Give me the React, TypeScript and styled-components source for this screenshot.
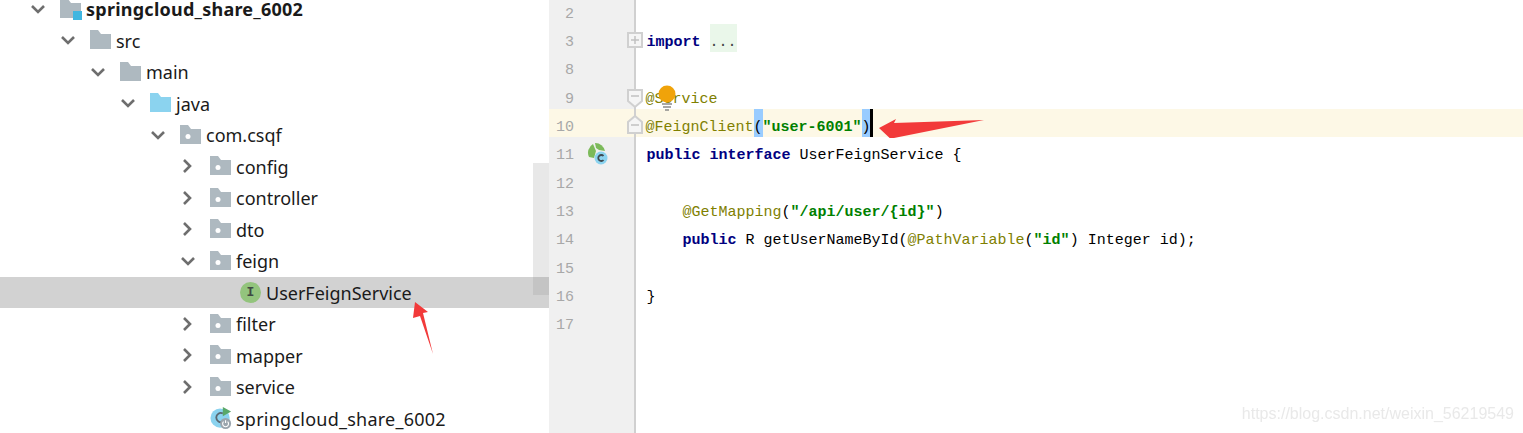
import styled, { createGlobalStyle } from "styled-components";

type Kind = "plain" | "package" | "source" | "root";

const treeRows: { name: string; level: number; open?: boolean; kind?: Kind; bold?: boolean; selected?: boolean; leaf?: "iface" | "run" }[] = [
  { name: "springcloud_share_6002", level: 0, open: true, kind: "root", bold: true },
  { name: "src", level: 1, open: true, kind: "plain" },
  { name: "main", level: 2, open: true, kind: "plain" },
  { name: "java", level: 3, open: true, kind: "source" },
  { name: "com.csqf", level: 4, open: true, kind: "package" },
  { name: "config", level: 5, kind: "package" },
  { name: "controller", level: 5, kind: "package" },
  { name: "dto", level: 5, kind: "package" },
  { name: "feign", level: 5, open: true, kind: "package" },
  { name: "UserFeignService", level: 6, leaf: "iface", selected: true },
  { name: "filter", level: 5, kind: "package" },
  { name: "mapper", level: 5, kind: "package" },
  { name: "service", level: 5, kind: "package" },
  { name: "springcloud_share_6002", level: 5, leaf: "run" },
];

function Chevron({ open }: { open?: boolean }) {
  return (
    <svg width="16" height="16" viewBox="0 0 16 16">
      <path
        d={open ? "M2 5l6 6 6-6" : "M4 2l6 6-6 6"}
        fill="none"
        stroke="#6e6e6e"
        strokeWidth="2.6"
      />
    </svg>
  );
}

function Folder({ kind }: { kind: Kind }) {
  const color = kind === "source" ? "#8bd3ef" : "#aeb9c0";
  return (
    <svg width="22" height="22" viewBox="0 0 22 22">
      <path d="M0 1h8l3 4h10v15H0z" fill={color} />
      {kind === "package" && <circle cx="8" cy="12.500" r="2.500" fill="#fff" />}
      {kind === "root" && <rect x="13" y="13" width="9" height="9" fill="#40b6e0" />}
    </svg>
  );
}

function RunIcon() {
  return (
    <svg width="24" height="24" viewBox="0 0 24 24">
      <circle cx="11" cy="12" r="10.500" fill="#8bd3ef" />
      <path d="M14 7a5 5 0 1 0 0 9" fill="none" stroke="#5a6770" strokeWidth="2" />
      <path d="M14 0l9 5-9 5z" fill="#59a869" />
      <circle cx="17" cy="18" r="6" fill="#9aa5ad" />
      <path d="M17 14.500v3M14.800 16a3.200 3.200 0 1 0 4.400 0" fill="none" stroke="#fff" strokeWidth="1.200" />
    </svg>
  );
}

function FoldMark({ type }: { type: "plus" | "close" | "open" }) {
  const outline =
    type === "plus"
      ? "M1 1h14v14H1z"
      : type === "close"
        ? "M1 1h14v11l-7 6-7-6z"
        : "M8 1l7 6v11H1V7z";
  const y = type === "open" ? 10 : type === "close" ? 7 : 8;
  return (
    <svg width="16" height="20" viewBox="0 0 16 20">
      <path d={outline} fill="#f5f5f5" stroke="#d0d0d0" strokeWidth="2" />
      <path d={`M4 ${y}h8`} stroke="#c0c0c0" strokeWidth="1.500" />
      {type === "plus" && <path d="M8 4v8" stroke="#c0c0c0" strokeWidth="1.500" />}
    </svg>
  );
}

function SpringMark() {
  return (
    <svg width="22" height="22" viewBox="0 0 22 22">
      <path d="M3 14A10 10 0 0 1 7 1l3 7-2 7z" fill="#7cba5a" />
      <path d="M9 0a10 10 0 0 1 10 8l-6-1-3-2z" fill="#7cba5a" />
      <circle cx="15" cy="15" r="6.500" fill="#8bd3ef" />
      <path d="M17.500 13a3 3 0 1 0 0 4" fill="none" stroke="#3f4a50" strokeWidth="1.800" />
    </svg>
  );
}

function App() {
  return (
    <Page>
      <GlobalStyle />
      <Tree>
        {treeRows.map((row, i) => (
          <TreeRow key={i} $level={row.level} $selected={row.selected}>
            <Toggle>{!row.leaf && <Chevron open={row.open} />}</Toggle>
            <NodeIcon>
              {row.kind && <Folder kind={row.kind} />}
              {row.leaf === "iface" && <InterfaceBadge>I</InterfaceBadge>}
              {row.leaf === "run" && <RunIcon />}
            </NodeIcon>
            <NodeName $bold={row.bold} $wide={row.leaf === "run"}>{row.name}</NodeName>
          </TreeRow>
        ))}
        <ScrollThumb />
        <ScrollThumbActive />
        <ArrowTree viewBox="0 0 30 60" width="30" height="60">
          <path d="M5 2l13 10-5 1 10 41-13-38-7 2z" fill="#f23a3a" />
        </ArrowTree>
      </Tree>
      <Editor>
        <CodeRow>
          <Gutter><LineNo>2</LineNo></Gutter>
          <Code />
        </CodeRow>
        <CodeRow>
          <Gutter><LineNo>3</LineNo><Marker /><FoldSlot $top={8}><FoldMark type="plus" /></FoldSlot></Gutter>
          <Code><Kw>import</Kw> <Folded>...</Folded></Code>
        </CodeRow>
        <CodeRow>
          <Gutter><LineNo>8</LineNo></Gutter>
          <Code />
        </CodeRow>
        <CodeRow>
          <Gutter><LineNo>9</LineNo><Marker /><FoldSlot $top={8}><FoldMark type="close" /></FoldSlot></Gutter>
          <Code $annotated><Ann>@Service</Ann></Code>
        </CodeRow>
        <CodeRow $current>
          <Gutter $current><LineNo>10</LineNo><Marker /><FoldSlot $top={6}><FoldMark type="open" /></FoldSlot></Gutter>
          <Code $annotated>
            <Ann>@FeignClient</Ann>
            <Match>(</Match>
            <Str>"user-6001"</Str>
            <Match>)</Match>
            <Caret />
          </Code>
        </CodeRow>
        <CodeRow>
          <Gutter><LineNo>11</LineNo><Marker><SpringMark /></Marker></Gutter>
          <Code><Kw>public interface</Kw> UserFeignService {"{"}</Code>
        </CodeRow>
        <CodeRow>
          <Gutter><LineNo>12</LineNo></Gutter>
          <Code />
        </CodeRow>
        <CodeRow>
          <Gutter><LineNo>13</LineNo></Gutter>
          <Code>{"    "}<Ann>@GetMapping</Ann>(<Str>"/api/user/{"{id}"}"</Str>)</Code>
        </CodeRow>
        <CodeRow>
          <Gutter><LineNo>14</LineNo></Gutter>
          <Code>{"    "}<Kw>public</Kw> R getUserNameById(<Ann>@PathVariable</Ann>(<Str>"id"</Str>) Integer id);</Code>
        </CodeRow>
        <CodeRow>
          <Gutter><LineNo>15</LineNo></Gutter>
          <Code />
        </CodeRow>
        <CodeRow>
          <Gutter><LineNo>16</LineNo></Gutter>
          <Code>{"}"}</Code>
        </CodeRow>
        <CodeRow>
          <Gutter><LineNo>17</LineNo></Gutter>
          <Code />
        </CodeRow>
        <FillerRow>
          <Gutter />
        </FillerRow>
        <Bulb viewBox="0 0 20 26" width="20" height="26">
          <circle cx="10" cy="9" r="8.500" fill="#f0a30a" />
          <path d="M5 19h10M6 22h8M8 25h4" stroke="#8a8a8a" strokeWidth="1.500" />
        </Bulb>
        <ArrowCode viewBox="0 0 110 24" width="110" height="24">
          <path d="M2 14l17-9-2 4 90-3-90 18 1 5z" fill="#f23a3a" />
        </ArrowCode>
        <Watermark>https://blog.csdn.net/weixin_56219549</Watermark>
      </Editor>
    </Page>
  );
}

const GlobalStyle = createGlobalStyle`
  html, body {
    margin: 0;
    padding: 0;
    background: #fff;
    overflow: hidden;
  }
`;

const Page = styled.div`
  display: flex;
  width: 1523px;
  height: 433px;
  overflow: hidden;
`;

const Tree = styled.div`
  position: relative;
  flex: 0 0 549px;
  margin-top: -7px;
  font-family: "Noto Sans", sans-serif;
  font-size: 18px;
  color: #1a1a1a;
`;

const TreeRow = styled.div<{ $level: number; $selected?: boolean }>`
  display: flex;
  align-items: center;
  height: 31.5px;
  padding-left: ${({ $level }) => 30 + $level * 30}px;
  background: ${({ $selected }) => ($selected ? "#d2d2d2" : "transparent")};
`;

const Toggle = styled.span`
  display: flex;
  flex: 0 0 16px;
  margin-right: 14px;
`;

const NodeIcon = styled.span`
  display: flex;
  align-items: center;
  flex: 0 0 22px;
  min-width: 0;
  height: 24px;
  margin-right: 4px;
`;

const NodeName = styled.span<{ $bold?: boolean; $wide?: boolean }>`
  padding-top: 1px;
  font-weight: ${({ $bold }) => ($bold ? 700 : 400)};
  letter-spacing: ${({ $bold, $wide }) => ($bold || $wide ? "0.24px" : "0")};
  white-space: nowrap;
`;

const InterfaceBadge = styled.span`
  display: flex;
  align-items: center;
  justify-content: center;
  width: 21px;
  height: 21px;
  border-radius: 50%;
  background: #93c47d;
  color: #3f4a44;
  font-family: "Liberation Mono", monospace;
  font-size: 13px;
  font-weight: 700;
`;

const ScrollThumb = styled.div`
  position: absolute;
  top: 170px;
  right: 0;
  width: 16px;
  height: 114px;
  background: #e8e8e8;
`;

const ScrollThumbActive = styled.div`
  position: absolute;
  top: 284px;
  right: 0;
  width: 16px;
  height: 18px;
  background: #c4c4c4;
`;

const ArrowTree = styled.svg`
  position: absolute;
  top: 307px;
  left: 410px;
`;

const Editor = styled.div`
  position: relative;
  flex: 1;
  display: flex;
  flex-direction: column;
  height: 437px;
  margin-top: -4.3px;
  font-family: "Liberation Mono", monospace;
  font-size: 15px;
`;

const CodeRow = styled.div<{ $current?: boolean }>`
  display: grid;
  grid-template-columns: 87px 1fr;
  flex: 0 0 28.33px;
  min-height: 0;
  background: ${({ $current }) => ($current ? "#fdf8e6" : "transparent")};
`;

const FillerRow = styled.div`
  display: grid;
  grid-template-columns: 87px 1fr;
  flex: 1;
`;

const Gutter = styled.div<{ $current?: boolean }>`
  display: flex;
  align-items: flex-start;
  height: 100%;
  background: ${({ $current }) => ($current ? "#fdf8e6" : "#f0f0f0")};
  border-right: 2px solid #d0d0d0;
`;

const LineNo = styled.span`
  flex: 0 0 25px;
  height: 28px;
  line-height: 38px;
  text-align: right;
  color: #a8a8a8;
`;

const Marker = styled.span`
  display: flex;
  flex: 0 0 22px;
  margin-left: 12px;
  padding-top: 6px;
`;

const FoldSlot = styled.span<{ $top: number }>`
  position: relative;
  z-index: 1;
  display: flex;
  margin: ${({ $top }) => $top}px -9px 0 19px;
`;

const Code = styled.pre<{ $annotated?: boolean }>`
  height: 28px;
  margin: 0;
  padding-left: ${({ $annotated }) => ($annotated ? "9.5px" : "10.5px")};
  font: inherit;
  line-height: 38px;
  color: #000;
  white-space: pre;
`;

const Kw = styled.span`
  color: #000080;
  font-weight: 700;
`;

const Ann = styled.span`
  color: #808000;
`;

const Str = styled.span`
  color: #008000;
  font-weight: 700;
`;

const Folded = styled.span`
  display: inline-block;
  height: 28px;
  background: #eaf7ea;
  color: #444;
`;

const Match = styled.span`
  display: inline-block;
  height: 28px;
  background: #99ccff;
`;

const Caret = styled.span`
  display: inline-block;
  vertical-align: top;
  width: 3px;
  height: 28px;
  margin-left: -1px;
  background: #000;
`;

const Bulb = styled.svg`
  position: absolute;
  top: 89px;
  left: 108px;
`;

const ArrowCode = styled.svg`
  position: absolute;
  top: 118px;
  left: 328px;
`;

const Watermark = styled.div`
  position: absolute;
  right: 9px;
  bottom: 10px;
  font-family: "Liberation Sans", sans-serif;
  font-size: 16px;
  color: #e9e9e9;
  filter: blur(0.4px);
`;

export default App;
